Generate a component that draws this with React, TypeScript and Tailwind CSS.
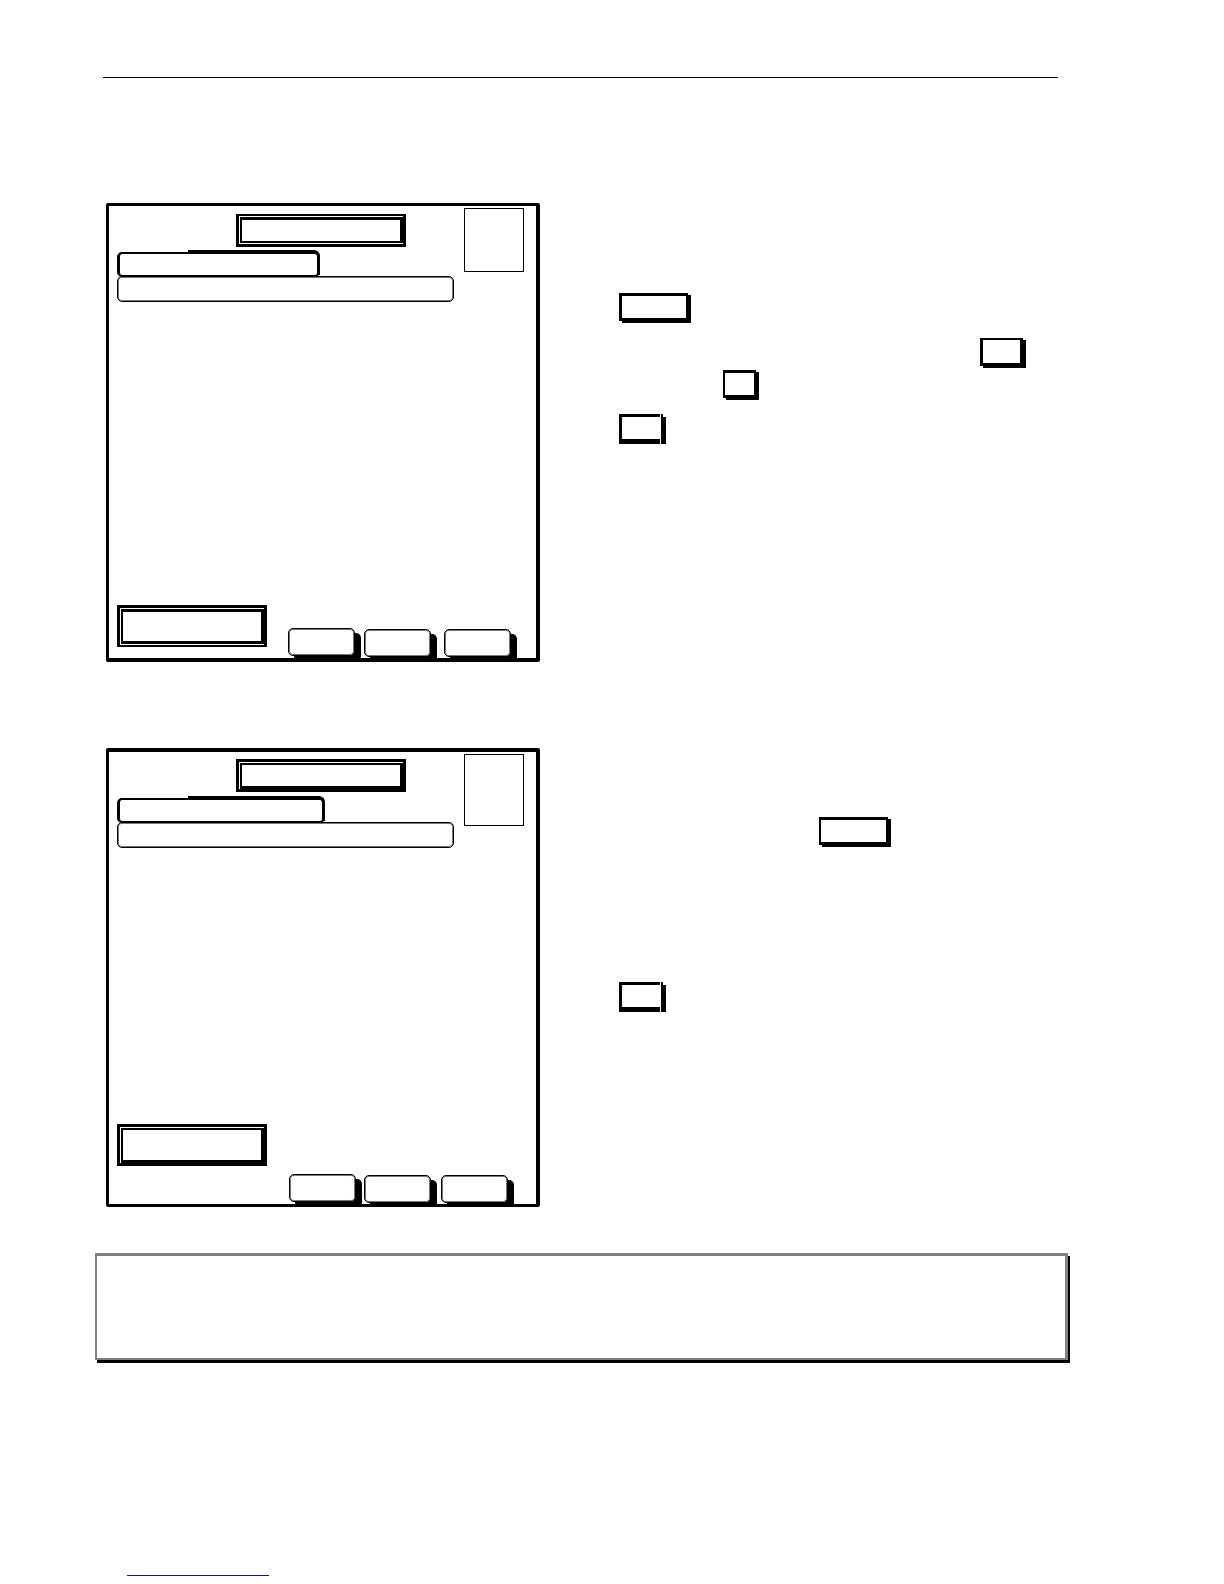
import React from "react";

function FramedBox({
  label,
  outer,
  inner,
}: {
  label: string;
  outer: string;
  inner: string;
}) {
  return (
    <div role="group" aria-label={label} className={`flex border-black ${outer}`}>
      <div className={`flex-1 border-black ${inner}`} />
    </div>
  );
}

function SoftKey({ label, className = "" }: { label: string; className?: string }) {
  return (
    <button
      type="button"
      aria-label={label}
      className={`h-7 w-[67px] shrink-0 rounded-[5px] border border-black bg-white shadow-[inset_0_0_0_1px_#777,6px_5px_0_0_#000] ${className}`}
    />
  );
}

function HardKey({ label, className }: { label: string; className: string }) {
  return (
    <button
      type="button"
      aria-label={label}
      className={`h-7 shrink-0 border-black bg-white ${className}`}
    />
  );
}

function SplitKey({ label, className = "" }: { label: string; className?: string }) {
  return (
    <button
      type="button"
      aria-label={label}
      className={`flex h-[30px] w-[47px] shrink-0 gap-px ${className}`}
    >
      <span className="h-7 flex-1 border-y-[3px] border-l-[3px] border-black shadow-[0_2px_0_0_#000]" />
      <span className="h-7 w-0.5 bg-black shadow-[0_2px_0_0_#000]" />
      <span className="-ml-px mt-[3px] h-[27px] w-[3px] bg-black" />
    </button>
  );
}

function Screen({
  label,
  frame,
  title,
  tab,
  picture,
  status,
  keys,
}: {
  label: string;
  frame: string;
  title: React.ReactNode;
  tab: string;
  picture: string;
  status: React.ReactNode;
  keys: React.ReactNode;
}) {
  return (
    <section
      aria-label={label}
      className={`flex min-h-[459px] w-[434px] shrink-0 flex-col justify-between overflow-hidden rounded-[2px] border-l-[3px] border-r-4 border-black pl-2 ${frame}`}
    >
      <div className="flex items-start justify-between pr-3">
        <div className="w-[337px]">
          {title}
          <div
            className={`relative h-[25px] rounded-[5px] border-x-[3px] border-y-2 border-black ${tab}`}
          >
            <div className="absolute -right-[3px] -top-1 bottom-0 left-[68px] rounded-tr-[6px] border-r-[3px] border-t-[3px] border-black" />
          </div>
          <div className="-mt-px h-[26px] rounded-[5px] border border-black shadow-[inset_0_0_0_1px_#777]" />
        </div>
        <div className={`w-[60px] border border-black ${picture}`} />
      </div>
      <div className="flex items-end">
        {status}
        {keys}
      </div>
    </section>
  );
}

export default function App() {
  return (
    <main className="flex min-h-screen flex-col bg-white pb-2 pl-[95px] pr-[156px] pt-[77px] font-['Liberation_Sans',sans-serif]">
      <hr className="ml-2 mr-2.5 border-t border-black" />

      <div className="ml-[11px] mt-[125px] flex">
        <Screen
          label="Screen 1"
          frame="border-b-4 border-t-[3px]"
          tab="mt-[5px] w-[203px]"
          picture="mt-0.5 h-16"
          title={
            <FramedBox
              label="Title"
              outer="ml-[119px] mt-2 h-[33px] w-[170px] border-b-[3px] border-l-[3px] border-r-[3px] border-t-2 pb-px pl-px pt-px"
              inner="border-b-2 border-l-2 border-r-[3px] border-t-[3px]"
            />
          }
          status={
            <FramedBox
              label="Status"
              outer="mb-[11px] h-[42px] w-[150px] border-x-[3px] border-b-2 border-t-[3px] pb-px pl-px pt-px"
              inner="border-b-[3px] border-l-2 border-r-[3px] border-t-[3px]"
            />
          }
          keys={
            <>
              <SoftKey label="Soft key 1" className="mb-0.5 ml-[21px]" />
              <SoftKey label="Soft key 2" className="mb-px ml-[9px]" />
              <SoftKey label="Soft key 3" className="mb-px ml-[13px]" />
            </>
          }
        />
        <div className="ml-[79px] flex flex-1 flex-col items-start pt-[90px]">
          <HardKey
            label="Key 1"
            className="w-[69px] border-[3px] border-r-2 shadow-[3px_2px_0_0_#000]"
          />
          <HardKey
            label="Key 2"
            className="mr-[45px] mt-[17px] w-[43px] self-end border-[3px] border-t-2 shadow-[3px_2px_0_0_#000]"
          />
          <HardKey
            label="Key 3"
            className="ml-[104px] mt-1 w-[33px] border-x-2 border-y-[3px] shadow-[3px_2px_0_0_#000]"
          />
          <SplitKey label="Key 4" className="mt-4" />
        </div>
      </div>

      <div className="ml-[11px] mt-[86px] flex">
        <Screen
          label="Screen 2"
          frame="border-b-[3px] border-t-4"
          tab="mt-1.5 w-[208px]"
          picture="mt-0.5 h-[72px]"
          title={
            <FramedBox
              label="Title"
              outer="ml-[119px] mt-[7px] h-[33px] w-[170px] border-[3px] pl-px pt-px"
              inner="border-b-[3px] border-l-2 border-r-[3px] border-t-2"
            />
          }
          status={
            <FramedBox
              label="Status"
              outer="mb-[38px] h-[42px] w-[150px] border-[3px] pl-px pt-px"
              inner="border-b-[3px] border-l-2 border-r-[3px] border-t-2"
            />
          }
          keys={
            <>
              <SoftKey label="Soft key 1" className="mb-0.5 ml-[22px]" />
              <SoftKey label="Soft key 2" className="mb-px ml-2" />
              <SoftKey label="Soft key 3" className="mb-px ml-2.5" />
            </>
          }
        />
        <div className="ml-[79px] flex flex-1 flex-col items-start pt-[69px]">
          <HardKey
            label="Key 5"
            className="ml-[200px] w-[69px] border-x-2 border-y-[3px] shadow-[3px_2px_0_0_#000]"
          />
          <SplitKey label="Key 6" className="mt-[137px]" />
        </div>
      </div>

      <aside
        aria-label="Note"
        className="mt-[46px] h-[107px] border-b-2 border-l-2 border-r-[3px] border-t-[3px] border-[#808080] shadow-[2px_3px_0_0_#000]"
      />

      <footer className="mt-auto flex pl-8">
        <a
          href="#top"
          aria-label="Link"
          className="h-5 w-[142px] border-b border-b-[#1a0d90]"
        />
      </footer>
    </main>
  );
}
